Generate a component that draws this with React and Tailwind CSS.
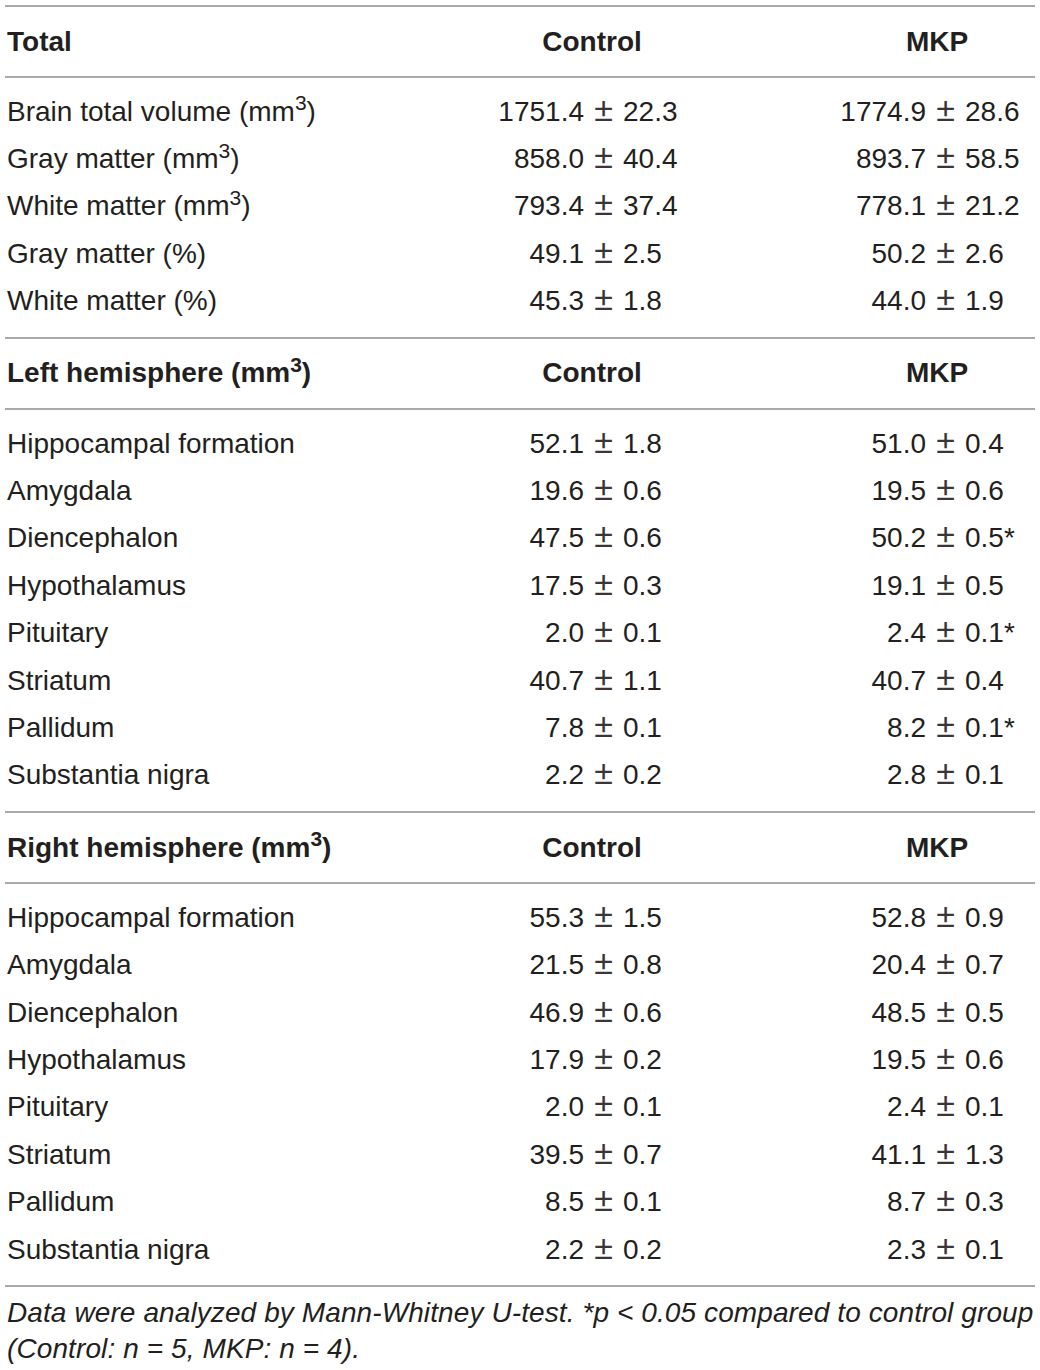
import React from 'react'

const sections = [
  {
    title: 'Total',
    unit: false,
    rows: [
      ['Brain total volume (mm', true, '1751.4', '22.3', '1774.9', '28.6'],
      ['Gray matter (mm', true, '858.0', '40.4', '893.7', '58.5'],
      ['White matter (mm', true, '793.4', '37.4', '778.1', '21.2'],
      ['Gray matter (%)', false, '49.1', '2.5', '50.2', '2.6'],
      ['White matter (%)', false, '45.3', '1.8', '44.0', '1.9']
    ]
  },
  {
    title: 'Left hemisphere (mm',
    unit: true,
    rows: [
      ['Hippocampal formation', false, '52.1', '1.8', '51.0', '0.4'],
      ['Amygdala', false, '19.6', '0.6', '19.5', '0.6'],
      ['Diencephalon', false, '47.5', '0.6', '50.2', '0.5*'],
      ['Hypothalamus', false, '17.5', '0.3', '19.1', '0.5'],
      ['Pituitary', false, '2.0', '0.1', '2.4', '0.1*'],
      ['Striatum', false, '40.7', '1.1', '40.7', '0.4'],
      ['Pallidum', false, '7.8', '0.1', '8.2', '0.1*'],
      ['Substantia nigra', false, '2.2', '0.2', '2.8', '0.1']
    ]
  },
  {
    title: 'Right hemisphere (mm',
    unit: true,
    rows: [
      ['Hippocampal formation', false, '55.3', '1.5', '52.8', '0.9'],
      ['Amygdala', false, '21.5', '0.8', '20.4', '0.7'],
      ['Diencephalon', false, '46.9', '0.6', '48.5', '0.5'],
      ['Hypothalamus', false, '17.9', '0.2', '19.5', '0.6'],
      ['Pituitary', false, '2.0', '0.1', '2.4', '0.1'],
      ['Striatum', false, '39.5', '0.7', '41.1', '1.3'],
      ['Pallidum', false, '8.5', '0.1', '8.7', '0.3'],
      ['Substantia nigra', false, '2.2', '0.2', '2.3', '0.1']
    ]
  }
]

function Rule() {
  return <div className="h-[2px] bg-[#a9a9a9]" />
}

// mean ± sd, lined up on the ± sign
function Value({ mean, sd, width }) {
  return (
    <div className="flex items-baseline">
      <span className={`${width} shrink-0 text-right`}>{mean}</span>
      <span className="w-[39px] shrink-0 text-center text-[34px] leading-[0] text-[#3a3637]">±</span>
      <span className="whitespace-nowrap">{sd}</span>
    </div>
  )
}

export default function App() {
  return (
    <div className="w-[1040px] h-[1370px] bg-white px-[5px] pt-[5px] text-[#231f20] font-['Liberation_Sans',Arial,sans-serif] text-[28px]">
      {sections.map((s) => (
        <div key={s.title}>
          <Rule />
          {/* header band */}
          <div className="h-[69px] flex items-center font-bold">
            <div className="w-[400px] shrink-0 pl-[2px]">
              {s.title}
              {s.unit && (
                <>
                  <sup>3</sup>)
                </>
              )}
            </div>
            <div className="w-[374px] shrink-0 text-center">Control</div>
            <div className="pl-[127px]">MKP</div>
          </div>
          <Rule />
          {/* body rows */}
          <div className="pt-[10px] pb-[12px]">
            {s.rows.map((r) => (
              <div key={r[0] + r[2]} className="h-[47.4px] flex items-center">
                <div className="w-[400px] shrink-0 pl-[2px]">
                  {r[0]}
                  {r[1] && (
                    <>
                      <sup>3</sup>)
                    </>
                  )}
                </div>
                <div className="w-[345px] shrink-0">
                  <Value mean={r[2]} sd={r[3]} width="w-[179px]" />
                </div>
                <div className="flex-1">
                  <Value mean={r[4]} sd={r[5]} width="w-[176px]" />
                </div>
              </div>
            ))}
          </div>
        </div>
      ))}
      <Rule />
      <p className="pt-[8px] pl-[2px] italic leading-[36px] text-[28px] tracking-[0.1px]">
        <span className="whitespace-nowrap">
          Data were analyzed by Mann-Whitney U-test. *p &lt; 0.05 compared to control group
        </span>
        <br />
        (Control: n = 5, MKP: n = 4).
      </p>
    </div>
  )
}
